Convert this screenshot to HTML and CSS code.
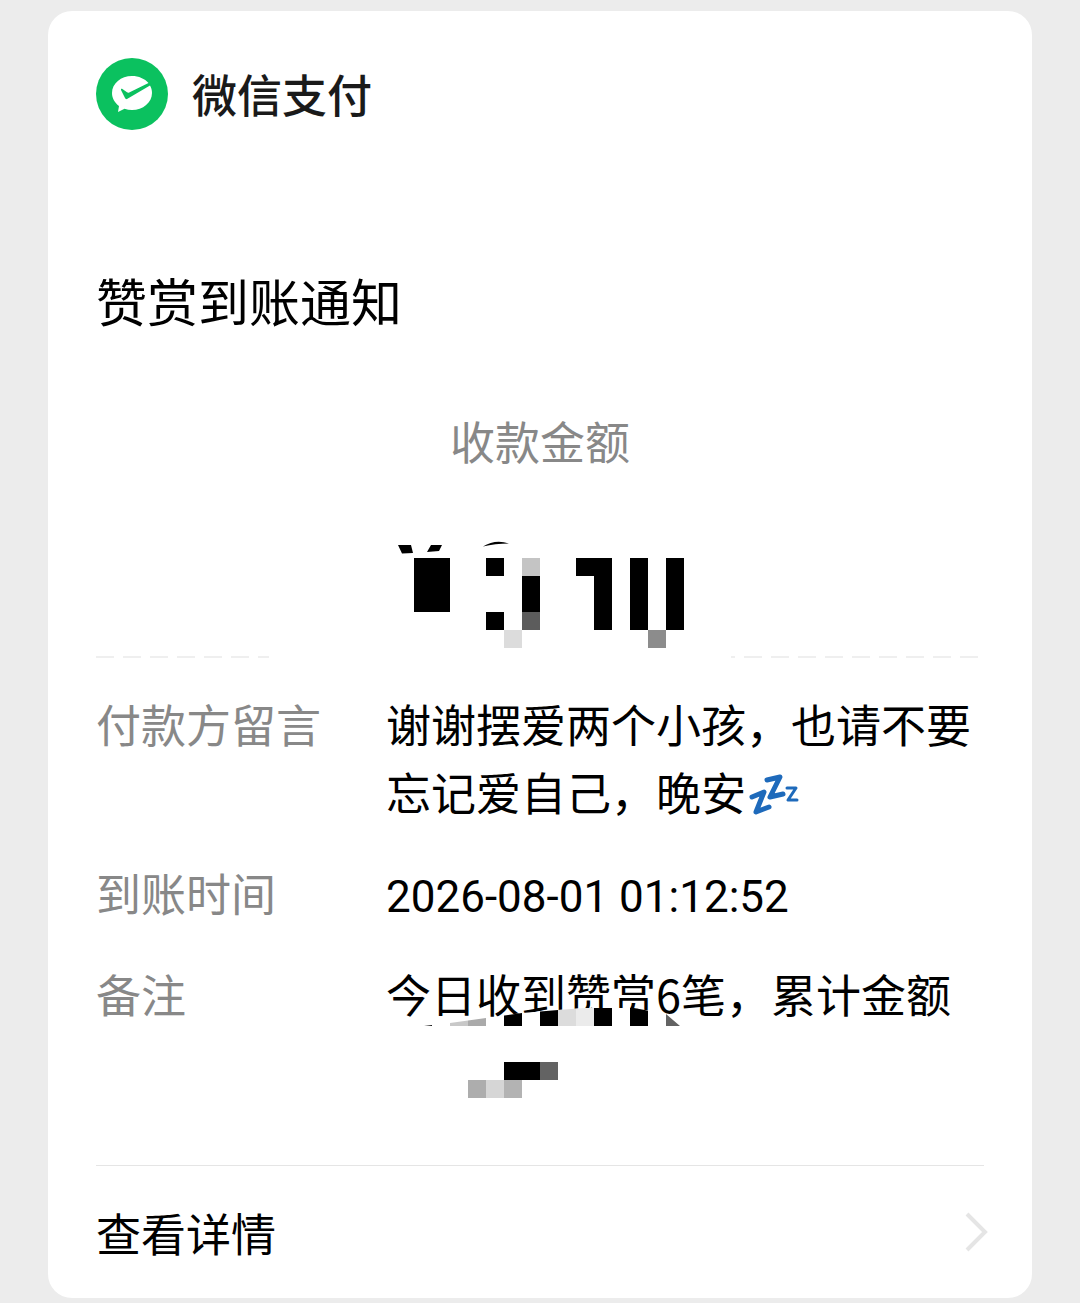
FILE: index.html
```
<!DOCTYPE html>
<html lang="zh-CN">
<head>
  <meta charset="UTF-8">
  <meta name="viewport" content="width=device-width, initial-scale=1.0">
  <title>微信支付</title>
  <link rel="stylesheet" href="styles.css">
</head>
<body>

  <main class="card">
    <header class="card-header">
      <svg class="logo" viewBox="0 0 72 72" aria-hidden="true">
        <circle cx="36" cy="36" r="36" fill="#0bc15f"/>
        <path fill="#fff" d="M36 18C25 18 16 25.500 16 35c0 5.200 2.700 9.800 7 12.900L22 54l6.500-3.200c2.400.8 4.900 1.200 7.500 1.200 11 0 20-7.500 20-17 0-2.800-.7-5.300-2-7.500L31 41c-1 .4-1.500 0-2-1l-4-8c-.3-1 .5-1.600 1.400-1l4.600 3.300c.7.4 1.300.5 2.200.2L52.500 25C48.800 20.700 42.800 18 36 18z"/>
      </svg>
      <span class="brand">微信支付</span>
    </header>

    <h1 class="title">赞赏到账通知</h1>

    <section class="amount">
      <p class="amount-label">收款金额</p>
      <svg class="amount-mosaic" viewBox="0 0 320 110" shape-rendering="crispEdges" aria-hidden="true">
        <g shape-rendering="auto">
          <path d="M18 5h13l2 8-11 .5zM51 5h11l-3 6-12 1zM103 6.500Q115-1 129 3.500 115 3.500 103 6.500z"/>
        </g>
        <path d="M34 18h36v54H34zM106 18h18v18h-18zM142 36h18v36h-18zM106 72h18v18h-18zM196 18h36v72h-18V36h-18zM250 18h18v72h-18zM286 18h18v72h-18z"/>
        <path fill="#c4c4c4" d="M142 18h18v18h-18z"/>
        <path fill="#5c5c5c" d="M142 72h18v18h-18z"/>
        <path fill="#dcdcdc" d="M124 90h18v18h-18z"/>
        <path fill="#8c8c8c" d="M268 90h18v18h-18z"/>
      </svg>
    </section>

    <div class="dashes"></div>

    <dl class="details">
      <dt>付款方留言</dt>
      <dd>谢谢摆爱两个小孩，也请不要忘记爱自己，晚安<svg class="zzz" viewBox="0 0 54 45" role="img" aria-label="zzz">
          <g fill="none" stroke="#1e6abb" stroke-linecap="round" stroke-linejoin="round">
            <path stroke-width="5" d="M6 25l12-5-8 20 13-5"/>
            <path stroke-width="5" d="M21 8l13-3-10 20 13-3"/>
            <path stroke-width="3" d="M41 16h9l-8 12h9"/>
          </g>
        </svg></dd>
      <dt>到账时间</dt>
      <dd class="time">2026-08-01 01:12:52</dd>
      <dt>备注</dt>
      <dd class="remark">今日收到赞赏6笔，累计金额
        <svg class="remark-mosaic" viewBox="0 0 300 100" aria-hidden="true">
          <clipPath id="smear">
            <path d="M37 26l26-3 36-5 36-5 36-3 27-2h49l32 6 14 12v74H37z"/>
          </clipPath>
          <g clip-path="url(#smear)" shape-rendering="crispEdges">
            <path fill="#fff" d="M0 0h300v100H0z"/>
            <path fill="#c8c8c8" d="M63 8h18v18H63z"/>
            <path fill="#aaa" d="M81 8h18v18H81z"/>
            <path d="M37 25h8v1h-8zM117 8h18v18h-18zM153 8h18v18h-18zM207 8h18v18h-18zM243 8h18v18h-18zM117 62h36v18h-36z"/>
            <path fill="#dcdcdc" d="M171 8h18v18h-18z"/>
            <path fill="#ebebeb" d="M189 8h18v18h-18z"/>
            <path fill="#636363" d="M279 8h18v18h-18zM153 62h18v18h-18z"/>
            <path fill="#adadad" d="M81 80h18v18H81z"/>
            <path fill="#d6d6d6" d="M99 80h18v18H99z"/>
            <path fill="#b3b3b3" d="M117 80h18v18h-18z"/>
          </g>
        </svg>
      </dd>
    </dl>

    <a class="more" href="#">
      <span>查看详情</span>
      <svg class="arrow" viewBox="0 0 24 42" aria-hidden="true">
        <path fill="none" stroke="#e5e5e5" stroke-width="4" d="M3 2l18 18L3 38"/>
      </svg>
    </a>
  </main>

</body>
</html>
```
FILE: styles.css
```
* { box-sizing: border-box; }
body {
  margin: 0; padding: 11px 48px 5px; background: #ececec; color: #000;
  font-family: "Noto Sans CJK SC", sans-serif;
  font-size: 45px; line-height: 68px;
}
h1, p, dl, dd { margin: 0; }
.card {
  background: #fff; border-radius: 24px; padding: 47px 48px 0;
}
.card-header {
  display: flex; align-items: center; gap: 24px;
}
.logo { width: 72px; height: 72px; }
.brand { color: #1a1a1a; font-weight: 500; line-height: 72px; }
.title {
  margin-top: 134px; font-size: 51px; font-weight: 400; line-height: 72px;
}
.amount {
  display: flex; flex-direction: column; align-items: center;
  gap: 65px; margin-top: 71px;
}
.amount-label { color: #888; }
.amount-mosaic { width: 320px; height: 110px; }
/* dashed rule, blank below the amount */
.dashes {
  height: 2px; margin: 6px 4px 0 0;
  background:
    linear-gradient(#fff, #fff) 41% 0 / 462px 2px no-repeat,
    repeating-linear-gradient(90deg, #efefef 0 18px, #fff 18px 27px);
}
.details {
  display: grid; grid-template-columns: 290px 1fr; row-gap: 33px;
  align-items: baseline; margin-top: 32px;
}
.details dt { color: #888; }
.details .time {
  font-family: Roboto, "Noto Sans CJK SC", sans-serif;
  font-size: 44px; line-height: 56px;
}
.zzz {
  width: 54px; height: 45px; vertical-align: -6px;
}
.remark { position: relative; min-height: 136px; }
.remark-mosaic {
  position: absolute; left: 1px; top: 40px; width: 300px; height: 100px;
}
.more {
  display: flex; align-items: center; justify-content: space-between;
  margin-top: 69px; padding: 33px 0 31px;
  border-top: 1px solid #e5e5e5; color: inherit; text-decoration: none;
}
.arrow { width: 24px; height: 42px; margin-right: -4px; }
```
